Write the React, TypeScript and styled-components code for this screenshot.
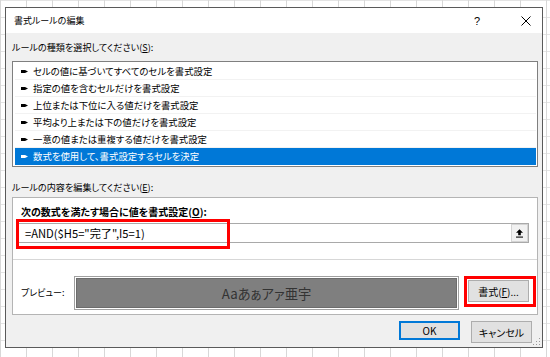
import * as React from "react";
import styled, { createGlobalStyle } from "styled-components";

const GlobalStyle = createGlobalStyle`
  html, body {
    margin: 0;
    padding: 0;
  }
  body {
    background-color: #ffffff;
    background-image:
      linear-gradient(to right, #d8d8d8 1px, transparent 1px),
      linear-gradient(to bottom, #e4e4e4 1px, transparent 1px);
    background-size: 26px 17px;
    font-family: "Noto Sans CJK JP", "Noto Sans", sans-serif;
    font-feature-settings: "palt";
    color: #000;
  }
`;

const Page = styled.div`
  width: 550px;
  height: 357px;
  box-sizing: border-box;
  padding: 7px 0 0 5px;
  overflow: hidden;
`;

const Dialog = styled.div`
  position: relative;
  width: 538px;
  height: 341px;
  box-sizing: border-box;
  border: 1px solid #5a5a5a;
  background: #f0f0f0;
  display: flex;
  flex-direction: column;
`;

const TitleBar = styled.div`
  height: 25px;
  background: #ffffff;
  display: flex;
  align-items: center;
  padding-left: 8px;
  font-size: 9px;
`;

const Title = styled.div`
  flex: 1;
`;

const TitleButton = styled.div<{ $gap: number }>`
  width: 20px;
  display: flex;
  justify-content: center;
  align-items: center;
  margin-right: ${(p) => p.$gap}px;
  font-family: "Liberation Sans", sans-serif;
  font-size: 11px;
`;

const Body = styled.div`
  flex: 1;
  display: flex;
  flex-direction: column;
  padding: 0 4px 0 6px;
`;

const SectionLabel = styled.div<{ $top: number }>`
  margin-top: ${(p) => p.$top}px;
  height: 14px;
  line-height: 14px;
  font-size: 9.1px;
`;

const RuleList = styled.div`
  margin-top: 7px;
  height: 106px;
  box-sizing: border-box;
  border: 1px solid #7f7f7f;
  background: #fff;
  padding: 1px 1px 0 2px;
`;

const RuleRow = styled.div<{ $selected?: boolean }>`
  height: 17px;
  box-sizing: border-box;
  display: flex;
  align-items: center;
  gap: 5px;
  padding-left: 6px;
  font-size: 9.4px;
  border-bottom: 1px solid ${(p) => (p.$selected ? "#0078d7" : "#f2f2f2")};
  background: ${(p) => (p.$selected ? "#0078d7" : "transparent")};
  color: ${(p) => (p.$selected ? "#fff" : "#000")};
`;

const Group = styled.div`
  margin-top: 3px;
  height: 118px;
  box-sizing: border-box;
  border: 1px solid #b4b4b4;
  background: #fff;
  display: flex;
  flex-direction: column;
`;

const FormulaSection = styled.div`
  height: 62px;
  box-sizing: border-box;
  border-bottom: 1px solid #d7d7d7;
  padding: 7px 8px 0 5px;
`;

const BoldLabel = styled.div`
  height: 14px;
  line-height: 14px;
  font-size: 10px;
  font-weight: 700;
  padding-left: 3px;
`;

const FormulaField = styled.div`
  position: relative;
  margin-top: 4px;
  height: 20px;
  box-sizing: border-box;
  border: 1px solid #a9a9a9;
  display: flex;
  align-items: center;
  padding-left: 6px;
`;

const FormulaText = styled.div`
  flex: 1;
  font-size: 11.2px;
  line-height: 18px;
`;

const CollapseButton = styled.div`
  width: 17px;
  height: 18px;
  box-sizing: border-box;
  border: 1px solid #d4d4d4;
  background: #f1f1f1;
  display: flex;
  align-items: center;
  justify-content: center;
`;

const Highlight = styled.div<{ $l: number; $t: number; $r: number; $b: number }>`
  position: absolute;
  left: ${(p) => p.$l}px;
  top: ${(p) => p.$t}px;
  right: ${(p) => p.$r}px;
  bottom: ${(p) => p.$b}px;
  border: 3px solid #ff0000;
  pointer-events: none;
`;

const PreviewSection = styled.div`
  flex: 1;
  display: flex;
  align-items: flex-start;
  padding: 16px 8px 0 8px;
`;

const PreviewLabel = styled.div`
  width: 53px;
  line-height: 34px;
  font-size: 9px;
`;

const PreviewFrame = styled.div`
  flex: 1;
  height: 34px;
  box-sizing: border-box;
  border: 1px solid #a0a0a0;
  padding: 1px;
  background: #fff;
  margin-right: 9px;
`;

const PreviewSample = styled.div`
  height: 100%;
  box-sizing: border-box;
  border: 1px solid #6c6c6c;
  background: #7f7f7f;
  display: flex;
  align-items: center;
  justify-content: center;
  font-size: 13.3px;
  color: #333;
`;

const ButtonSpot = styled.div`
  position: relative;
  margin-top: 4px;
`;

const DialogButton = styled.div<{ $primary?: boolean }>`
  width: 61px;
  height: ${(p) => (p.$primary ? 19 : 22)}px;
  box-sizing: border-box;
  border: ${(p) => (p.$primary ? "2px solid #0078d7" : "1px solid #adadad")};
  background: #e1e1e1;
  display: flex;
  align-items: center;
  justify-content: center;
  font-size: 10px;
`;

const Footer = styled.div`
  margin-top: 6px;
  display: flex;
  justify-content: flex-end;
  gap: 11px;
  padding-right: 6px;
`;

const Grip = styled.div`
  position: absolute;
  right: 2px;
  bottom: 2px;
  width: 8px;
  height: 8px;
  background-image: radial-gradient(circle, #9a9a9a 0.8px, transparent 1px);
  background-size: 3px 3px;
  clip-path: polygon(100% 0, 100% 100%, 0 100%);
`;

const RuleIcon = ({ light }: { light?: boolean }) => (
  <svg width="7" height="5" viewBox="0 0 7 5">
    <polygon points="0,1 4,1 7,2.5 4,4 0,4" fill={light ? "#fff" : "#000"} />
  </svg>
);

const CloseIcon = () => (
  <svg width="10" height="10" viewBox="0 0 10 10">
    <path d="M0.5 0.5 L9.5 9.5 M9.5 0.5 L0.5 9.5" stroke="#000" strokeWidth="1" />
  </svg>
);

const CollapseIcon = () => (
  <svg width="7" height="9" viewBox="0 0 8 10">
    <polygon points="4,0 8,4 5.5,4 5.5,7 2.5,7 2.5,4 0,4" fill="#000" />
    <rect x="0" y="8.5" width="8" height="1.2" fill="#000" />
  </svg>
);

const rules = [
  "セルの値に基づいてすべてのセルを書式設定",
  "指定の値を含むセルだけを書式設定",
  "上位または下位に入る値だけを書式設定",
  "平均より上または下の値だけを書式設定",
  "一意の値または重複する値だけを書式設定",
  "数式を使用して、書式設定するセルを決定",
];

const App = () => (
  <Page>
    <GlobalStyle />
    <Dialog>
      <TitleBar>
        <Title>書式ルールの編集</Title>
        <TitleButton $gap={29}>?</TitleButton>
        <TitleButton $gap={6}>
          <CloseIcon />
        </TitleButton>
      </TitleBar>
      <Body>
        <SectionLabel $top={7}>
          ルールの種類を選択してください(<u>S</u>):
        </SectionLabel>
        <RuleList>
          {rules.map((r, i) => {
            const sel = i === rules.length - 1;
            return (
              <RuleRow key={r} $selected={sel}>
                <RuleIcon light={sel} />
                {r}
              </RuleRow>
            );
          })}
        </RuleList>
        <SectionLabel $top={13}>
          ルールの内容を編集してください(<u>E</u>):
        </SectionLabel>
        <Group>
          <FormulaSection>
            <BoldLabel>
              次の数式を満たす場合に値を書式設定(<u>O</u>):
            </BoldLabel>
            <FormulaField>
              <FormulaText>=AND($H5="完了",I5=1)</FormulaText>
              <CollapseButton>
                <CollapseIcon />
              </CollapseButton>
              <Highlight $l={-3} $t={-5} $r={298} $b={-7} />
            </FormulaField>
          </FormulaSection>
          <PreviewSection>
            <PreviewLabel>プレビュー:</PreviewLabel>
            <PreviewFrame>
              <PreviewSample>Aaあぁアァ亜宇</PreviewSample>
            </PreviewFrame>
            <ButtonSpot>
              <DialogButton>
                書式(<u>F</u>)...
              </DialogButton>
              <Highlight $l={-4} $t={-4} $r={-7} $b={-5} />
            </ButtonSpot>
          </PreviewSection>
        </Group>
        <Footer>
          <DialogButton $primary>OK</DialogButton>
          <DialogButton>キャンセル</DialogButton>
        </Footer>
      </Body>
      <Grip />
    </Dialog>
  </Page>
);

export default App;
